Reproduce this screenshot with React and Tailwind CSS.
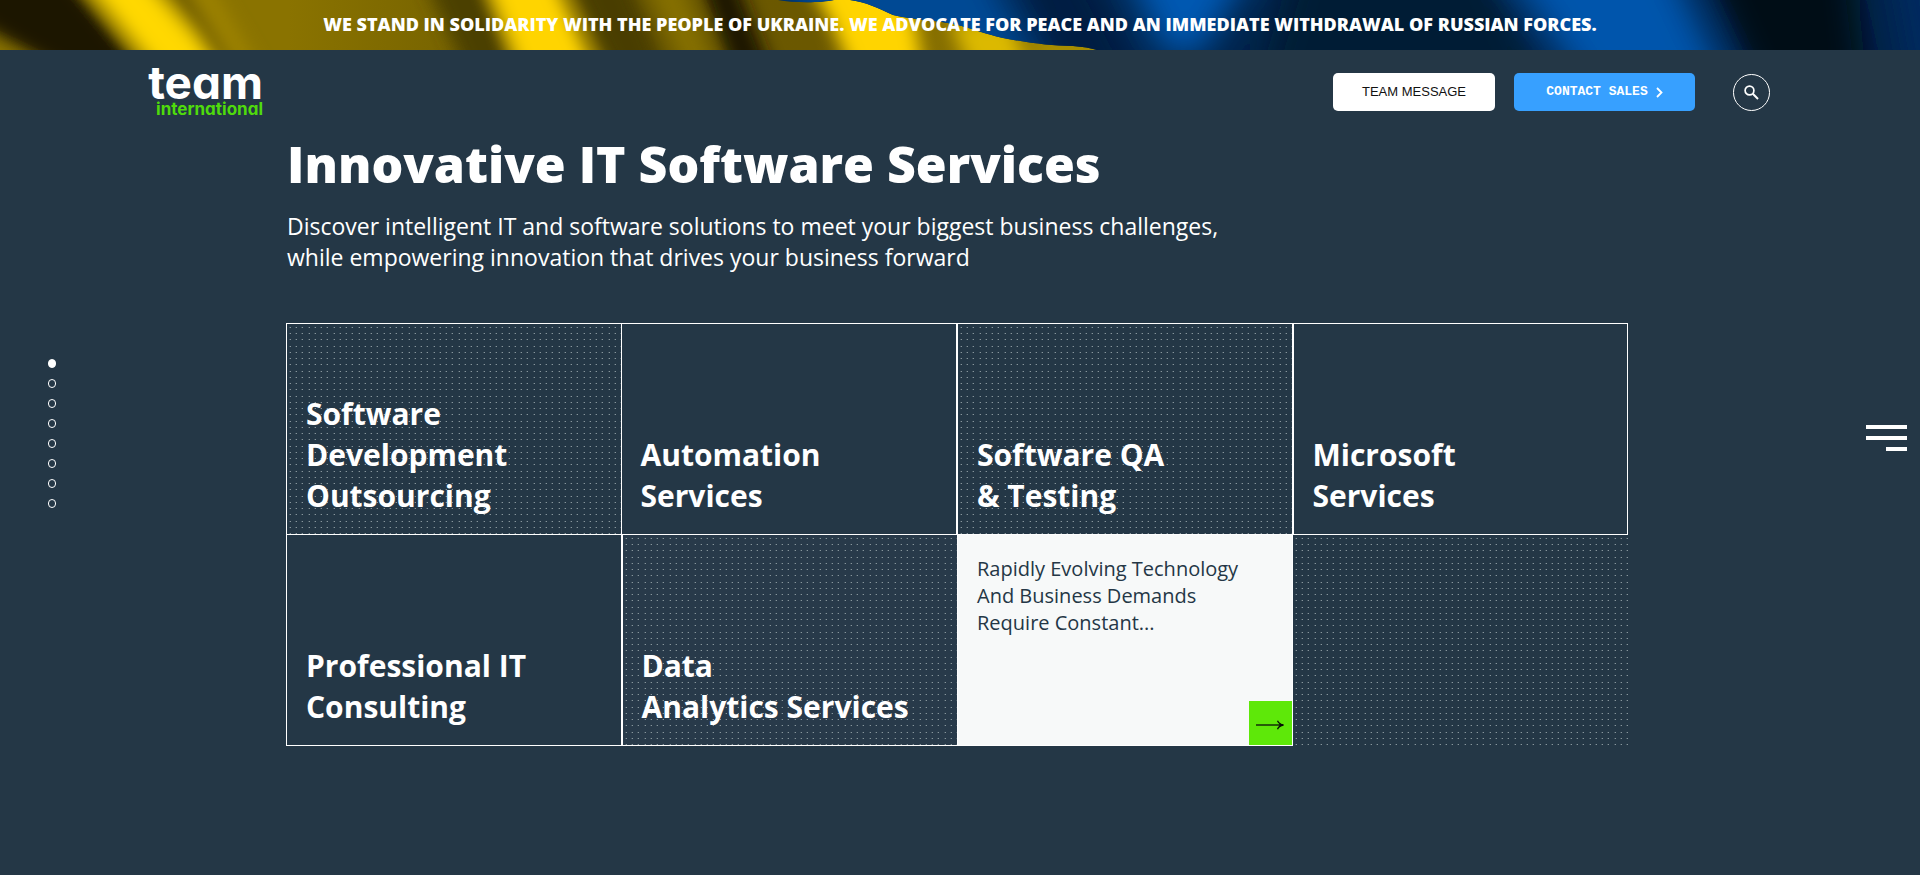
import React from "react";

const services = [
  { lines: ["Software", "Development", "Outsourcing"], dots: true, cell: "border" },
  { lines: ["Automation", "Services"], cell: "border-y border-r" },
  { lines: ["Software QA", "& Testing"], dots: true, cell: "border" },
  { lines: ["Microsoft", "Services"], cell: "border" },
  { lines: ["Professional IT", "Consulting"], cell: "border-x border-b" },
  { lines: ["Data", "Analytics Services"], dots: true, cell: "border-l border-b bg-[#283a4a]" },
];

function Dots({ id }) {
  return (
    <svg className="absolute inset-0 h-full w-full" aria-hidden="true" shapeRendering="crispEdges">
      <defs>
        <pattern id={id} width="25" height="25" patternUnits="userSpaceOnUse">
          {[3, 9, 15, 22].map((y) =>
            [3, 9, 15, 22].map((x) => (
              <g key={x + "-" + y}>
                <rect x={x} y={y} width="1" height="1" fill="#87959c" />
                <rect x={x - 1} y={y} width="1" height="1" fill="#465863" />
              </g>
            ))
          )}
        </pattern>
      </defs>
      <rect width="100%" height="100%" fill={`url(#${id})`} />
    </svg>
  );
}

function Flag() {
  return (
    <svg
      className="absolute inset-0 h-full w-full"
      viewBox="0 0 1920 50"
      preserveAspectRatio="none"
      aria-hidden="true"
    >
      <defs>
        <linearGradient id="gold" gradientUnits="userSpaceOnUse" x1="0" y1="0" x2="960" y2="0">
          <stop offset="0" stopColor="#8a7300" />
          <stop offset="0.3" stopColor="#8a7300" />
          <stop offset="0.45" stopColor="#7a6600" />
          <stop offset="0.6" stopColor="#6b5900" />
          <stop offset="0.85" stopColor="#6b5800" />
          <stop offset="1" stopColor="#8a7200" />
        </linearGradient>
        <filter id="soft" filterUnits="userSpaceOnUse" x="-100" y="-100" width="2200" height="260">
          <feGaussianBlur stdDeviation="9" />
        </filter>
        <filter id="softer" filterUnits="userSpaceOnUse" x="600" y="-120" width="1500" height="300">
          <feGaussianBlur stdDeviation="17" />
        </filter>
        <clipPath id="blueArea">
          <path d="M778 0 C795 3 820 3 834 0 H850 C866 2 878 8 893 15 C915 20 935 20 953 24 C975 29 985 34 1003 38 C1030 43 1050 46 1073 46 Q1088 47 1097 50 H1920 V0Z" />
        </clipPath>
      </defs>
      <rect width="1920" height="50" fill="url(#gold)" />
      <g filter="url(#soft)">
        <path d="M-50 -30 H65 L155 80 H75 L-50 10Z" fill="#1a1500" />
        <path d="M-40 30 L60 80 H-40Z" fill="#8c7500" />
        <path d="M75 -30 H137 L235 80 H165Z" fill="#ffd800" />
        <path d="M150 -30 H168 L240 80 H226Z" fill="#5e4e00" />
        <path d="M182 -30 H200 L265 80 H245Z" fill="#a08500" />
        <path d="M420 -30 H485 L530 80 H470Z" fill="#4c3f00" />
        <path d="M482 -30 H550 L600 80 H524Z" fill="#ffd400" />
        <path d="M564 -30 H625 L670 80 H615Z" fill="#4a3e00" />
        <path d="M640 -30 H675 L720 80 H690Z" fill="#857000" />
        <path d="M696 -30 H732 L775 80 H735Z" fill="#1c1700" />
        <path d="M800 -30 H875 L915 20 L925 80 H855 L830 20Z" fill="#ffd400" />
        <path d="M950 20 H1010 L1030 70 H970Z" fill="#dcb900" />
        <path d="M1030 35 H1110 V70 H1040Z" fill="#a88e00" />
      </g>
      <g clipPath="url(#blueArea)">
        <rect x="770" width="1150" height="50" fill="#00234a" />
        <g filter="url(#softer)">
          <path d="M750 -60 H975 L1050 90 H850Z" fill="#004894" />
          <path d="M1000 -60 H1070 L1150 90 H1060Z" fill="#001c42" />
          <path d="M1110 -60 H1270 L1200 55 H1165Z" fill="#0058b2" />
          <path d="M1300 -60 H1480 L1560 110 H1250Z" fill="#001a36" />
          <path d="M1485 -60 H1660 L1740 110 H1600Z" fill="#0054ac" />
          <path d="M1690 -60 H1850 L1870 110 H1765Z" fill="#000a18" />
          <path d="M1885 -60 H1980 V110 H1915Z" fill="#002c60" />
        </g>
      </g>
    </svg>
  );
}

function Logo() {
  return (
    <a
      href="#"
      aria-label="team international"
      className="flex w-[114px] flex-col items-end gap-[2px] font-['Inter',sans-serif] font-bold [font-feature-settings:'cv11']"
    >
      <span className="text-[46px] leading-8 text-white">team</span>
      <span className="text-[17px] leading-[18px] text-[#4fdb0c]">international</span>
    </a>
  );
}

export default function App() {
  return (
    <div className="relative min-h-screen bg-[#243746] font-['Open_Sans',sans-serif] text-white">
      <div className="relative h-[50px] overflow-hidden">
        <Flag />
        <p className="relative text-center text-[18px] leading-[49px] font-extrabold">
          WE STAND IN SOLIDARITY WITH THE PEOPLE OF UKRAINE. WE ADVOCATE FOR PEACE AND AN IMMEDIATE WITHDRAWAL OF RUSSIAN FORCES.
        </p>
      </div>

      <header className="flex h-[84px] items-center justify-between pr-[150px] pl-[149px]">
        <Logo />
        <div className="flex items-center">
          <button className="h-[38px] w-[162px] rounded-[5px] bg-white font-['Liberation_Sans',sans-serif] text-[13px] text-[#111]">
            TEAM MESSAGE
          </button>
          <button className="ml-[19px] flex h-[38px] w-[181px] items-center justify-center gap-2 rounded-[5px] bg-[#37a0ff] font-['Liberation_Mono',monospace] text-[13px] font-bold">
            CONTACT SALES
            <svg width="7" height="11" viewBox="0 0 7 11" fill="none" stroke="white" strokeWidth="1.8" aria-hidden="true">
              <path d="M1 1 L5.5 5.5 L1 10" />
            </svg>
          </button>
          <button aria-label="Search" className="ml-[38px] flex size-[37px] items-center justify-center rounded-full border border-white">
            <svg width="15" height="15" viewBox="0 0 15 15" fill="none" stroke="white" strokeWidth="1.7" aria-hidden="true">
              <circle cx="5.5" cy="5.5" r="4.4" />
              <path d="M8.8 8.8 L14 14" strokeWidth="2" />
            </svg>
          </button>
        </div>
      </header>

      <main className="pr-[292px] pl-[286px]">
        <div className="pl-px">
          <h1 className="text-[50px] leading-[60px] font-extrabold">Innovative IT Software Services</h1>
          <p className="mt-[17px] text-[23px] leading-[31px]">
            Discover intelligent IT and software solutions to meet your biggest business challenges,
            <br />
            while empowering innovation that drives your business forward
          </p>
        </div>
        <div className="mt-[50px] grid grid-cols-4 grid-rows-[212px_211px]">
          {services.map((s, i) => (
            <a key={i} href="#" className={`relative flex items-end border-white px-[19px] pb-[18px] ${s.cell}`}>
              {s.dots && <Dots id={"dots" + i} />}
              <h2 className="relative text-[30px] leading-[41px] font-bold">
                {s.lines.map((l) => (
                  <span key={l} className="block whitespace-nowrap">{l}</span>
                ))}
              </h2>
            </a>
          ))}
          <a href="#" className="flex flex-col justify-between border-x border-b border-white bg-[#f7f9f9] text-[#243746]">
            <p className="px-[19px] pt-5 text-xl leading-[27px]">
              Rapidly Evolving Technology
              <br />
              And Business Demands
              <br />
              Require Constant...
            </p>
            <span className="flex h-11 w-[43px] items-center justify-center self-end bg-[#5ee809] pt-1">
              <svg width="28" height="10" viewBox="0 0 28 10" fill="none" stroke="#081008" strokeWidth="1.3" aria-hidden="true">
                <path d="M0 5 H27" />
                <path d="M21.500 0.800 C22.500 3 24.500 4.600 27.500 5 C24.500 5.400 22.500 7 21.500 9.200" />
                <path d="M23.500 3.500 L27.500 5 L23.500 6.500Z" fill="#081008" stroke="none" />
              </svg>
            </span>
          </a>
          <div className="relative">
            <Dots id="dotsLast" />
          </div>
        </div>
      </main>

      <nav aria-label="Sections" className="absolute top-[359px] left-12 flex flex-col gap-[11px]">
        {[0, 1, 2, 3, 4, 5, 6, 7].map((n) => (
          <a
            key={n}
            href="#"
            aria-label={"Section " + (n + 1)}
            className={`h-[9px] w-2 rounded-full border border-white ${n === 0 ? "bg-white" : ""}`}
          />
        ))}
      </nav>

      <button aria-label="Menu" className="absolute top-[425px] right-[13px] flex flex-col items-end gap-[7px]">
        <span className="h-1 w-[41px] bg-white" />
        <span className="h-1 w-[41px] bg-white" />
        <span className="h-1 w-[21px] bg-white" />
      </button>
    </div>
  );
}
